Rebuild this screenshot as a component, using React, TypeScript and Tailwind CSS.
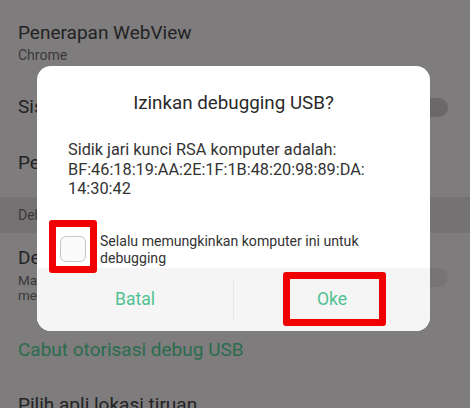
import React from "react";

const font = { fontFamily: "Roboto, 'Noto Sans', Arial, sans-serif" };

function Toggle({ className }: { className: string }) {
  return <div className={`absolute rounded-full ${className}`} />;
}

function SettingsList() {
  return (
    <div className="relative flex h-[408px] w-[470px] flex-col overflow-hidden bg-[#7e7c7d]">
      <div className="h-[80px] shrink-0 px-[18px] pt-[21px]">
        <div className="text-[19px] leading-[24px] text-[#232323]">Penerapan WebView</div>
        <div className="mt-[1px] text-[14px] leading-[18px] text-[#3a3939]">Chrome</div>
      </div>
      <div className="relative h-[55px] shrink-0 px-[18px] pt-[15px]">
        <div className="text-[19px] leading-[24px] text-[#232323]">Sistem pembaruan otomatis</div>
        <Toggle className="right-[22px] top-[18px] h-[19px] w-[44px] bg-[#6a6869]" />
      </div>
      <div className="h-[62px] shrink-0 px-[18px] pt-[16px]">
        <div className="text-[19px] leading-[24px] text-[#232323]">Pengaturan pengembang</div>
      </div>
      <div className="flex h-[36px] shrink-0 items-center bg-[#747273] px-[18px]">
        <div className="text-[14px] leading-[18px] text-[#3c3b3b]">Debugging</div>
      </div>
      <div className="relative h-[85px] shrink-0 px-[18px] pt-[13px]">
        <div className="text-[19px] leading-[24px] text-[#232323]">Debugging USB</div>
        <div className="mt-[3px] text-[13.5px] leading-[15px] text-[#3a3939]">Masuk mode debug saat USB</div>
        <div className="text-[13.5px] leading-[15px] text-[#3a3939]">menyambung</div>
        <Toggle className="right-[22px] top-[35px] h-[19px] w-[44px] bg-[#767475]" />
      </div>
      <div className="h-[62px] shrink-0 px-[18px] pt-[20px]">
        <div className="text-[19px] leading-[24px] text-[#2b6c4e]">Cabut otorisasi debug USB</div>
      </div>
      <div className="shrink-0 px-[18px] pt-[13px]">
        <div className="text-[19px] leading-[24px] text-[#232323]">Pilih apli lokasi tiruan</div>
      </div>
    </div>
  );
}

function Dialog() {
  return (
    <div className="absolute left-[37px] top-[66px] w-[393px] overflow-hidden rounded-[14px] bg-white">
      <div className="pt-[24px] text-center text-[18.8px] leading-[26px] text-[#2a2a2a]">
        Izinkan debugging USB?
      </div>
      <div className="mt-[24px] pl-[31px] text-[16.3px] leading-[19.5px] text-[#333]">
        Sidik jari kunci RSA komputer adalah:
        <br />
        BF:46:18:19:AA:2E:1F:1B:48:20:98:89:DA:
        <br />
        14:30:42
      </div>
      <div className="mt-[34px] flex h-[34px] items-start pl-[23px]">
        <div className="relative mt-[3px] h-[26px] w-[26px] shrink-0">
          <div className="h-[26px] w-[26px] rounded-[6px] border-[1.5px] border-[#c6c6c6] bg-[#fafafa]" />
          <div className="absolute -left-[11px] -top-[16px] h-[53px] w-[48px] rounded-[3px] border-[7px] border-[#f00000]" />
        </div>
        <div className="ml-[14px] text-[14.1px] leading-[17px] text-[#333]">
          Selalu memungkinkan komputer ini untuk
          <br />
          debugging
        </div>
      </div>
      <div className="mt-[1px] flex h-[63px] bg-[#f5f5f5]">
        <div className="flex flex-1 items-center justify-center text-[17.6px] text-[#52c192]">Batal</div>
        <div className="my-[12px] w-px bg-[#e6e6e6]" />
        <div className="relative flex flex-1 items-center justify-center text-[17.6px] text-[#52c192]">
          <span className="relative z-10">Oke</span>
          <div className="absolute left-[49px] top-[4px] h-[54px] w-[103px] rounded-[3px] border-[7px] border-[#f00000]" />
        </div>
      </div>
    </div>
  );
}

export default function App() {
  return (
    <div className="relative h-[408px] w-[470px] overflow-hidden" style={font}>
      <SettingsList />
      <Dialog />
    </div>
  );
}
